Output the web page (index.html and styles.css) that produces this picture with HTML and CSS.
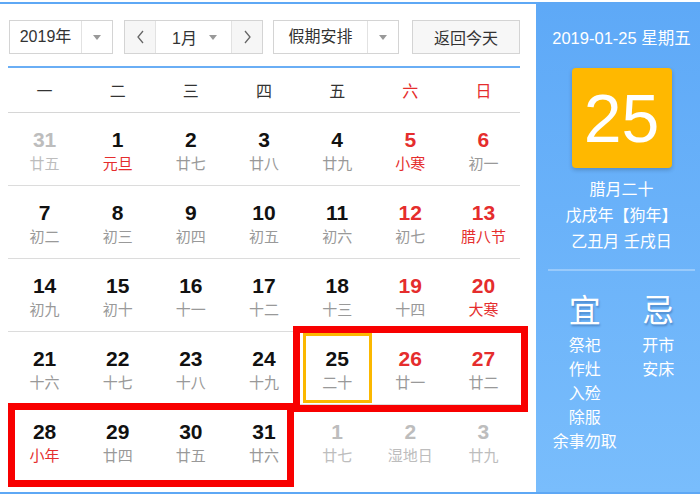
FILE: index.html
```html
<!DOCTYPE html>
<html lang="zh-CN">
<head>
<meta charset="utf-8">
<title>日历</title>
<link rel="stylesheet" href="styles.css">
</head>
<body>
<div class="cal">
  <div class="main">
    <div class="toolbar">
      <div class="sel sel-year">
        <span class="sel-text">2019年</span>
        <span class="sel-arrow"><i class="tri"></i></span>
      </div>
      <div class="month">
        <span class="mbtn"><svg width="9" height="14" viewBox="0 0 9 14"><path d="M7 1 L2 7 L7 13" fill="none" stroke="#666" stroke-width="1.3"/></svg></span>
        <span class="mmid"><span class="mtext">1月</span><i class="tri"></i></span>
        <span class="mbtn"><svg width="9" height="14" viewBox="0 0 9 14"><path d="M2 1 L7 7 L2 13" fill="none" stroke="#666" stroke-width="1.3"/></svg></span>
      </div>
      <div class="sel sel-holiday">
        <span class="sel-text">假期安排</span>
        <span class="sel-arrow"><i class="tri"></i></span>
      </div>
      <div class="today-btn">返回今天</div>
    </div>
    <div class="blue-line"></div>
    <div class="week">
      <span>一</span><span>二</span><span>三</span><span>四</span><span>五</span><span class="red">六</span><span class="red">日</span>
    </div>
    <div class="days">
      <div class="row">
        <div class="cell other"><b>31</b><em>廿五</em></div>
        <div class="cell"><b>1</b><em class="red">元旦</em></div>
        <div class="cell"><b>2</b><em>廿七</em></div>
        <div class="cell"><b>3</b><em>廿八</em></div>
        <div class="cell"><b>4</b><em>廿九</em></div>
        <div class="cell"><b class="red">5</b><em class="red">小寒</em></div>
        <div class="cell"><b class="red">6</b><em>初一</em></div>
      </div>
      <div class="row">
        <div class="cell"><b>7</b><em>初二</em></div>
        <div class="cell"><b>8</b><em>初三</em></div>
        <div class="cell"><b>9</b><em>初四</em></div>
        <div class="cell"><b>10</b><em>初五</em></div>
        <div class="cell"><b>11</b><em>初六</em></div>
        <div class="cell"><b class="red">12</b><em>初七</em></div>
        <div class="cell"><b class="red">13</b><em class="red">腊八节</em></div>
      </div>
      <div class="row">
        <div class="cell"><b>14</b><em>初九</em></div>
        <div class="cell"><b>15</b><em>初十</em></div>
        <div class="cell"><b>16</b><em>十一</em></div>
        <div class="cell"><b>17</b><em>十二</em></div>
        <div class="cell"><b>18</b><em>十三</em></div>
        <div class="cell"><b class="red">19</b><em>十四</em></div>
        <div class="cell"><b class="red">20</b><em class="red">大寒</em></div>
      </div>
      <div class="row">
        <div class="cell"><b>21</b><em>十六</em></div>
        <div class="cell"><b>22</b><em>十七</em></div>
        <div class="cell"><b>23</b><em>十八</em></div>
        <div class="cell"><b>24</b><em>十九</em></div>
        <div class="cell today"><b>25</b><em>二十</em></div>
        <div class="cell"><b class="red">26</b><em>廿一</em></div>
        <div class="cell"><b class="red">27</b><em>廿二</em></div>
      </div>
      <div class="row">
        <div class="cell"><b>28</b><em class="red">小年</em></div>
        <div class="cell"><b>29</b><em>廿四</em></div>
        <div class="cell"><b>30</b><em>廿五</em></div>
        <div class="cell"><b>31</b><em>廿六</em></div>
        <div class="cell other"><b>1</b><em>廿七</em></div>
        <div class="cell other"><b>2</b><em>湿地日</em></div>
        <div class="cell other"><b>3</b><em>廿九</em></div>
      </div>
    </div>
    <div class="mark mark-a"></div>
    <div class="mark mark-b"></div>
  </div>
  <div class="side">
    <div class="side-date">2019-01-25 星期五</div>
    <div class="big-day">25</div>
    <div class="lunar">腊月二十</div>
    <div class="lunar">戊戌年【狗年】</div>
    <div class="lunar">乙丑月 壬戌日</div>
    <div class="sep"></div>
    <div class="yiji">
      <div class="col">
        <div class="yj-title">宜</div>
        <div class="yj-item">祭祀</div>
        <div class="yj-item">作灶</div>
        <div class="yj-item">入殓</div>
        <div class="yj-item">除服</div>
        <div class="yj-item">余事勿取</div>
      </div>
      <div class="col">
        <div class="yj-title">忌</div>
        <div class="yj-item">开市</div>
        <div class="yj-item">安床</div>
      </div>
    </div>
  </div>
</div>
</body>
</html>
```

FILE: styles.css
```css
* { box-sizing: border-box; }
html, body { margin: 0; padding: 0; background: #fff; }
body {
  font-family: "Liberation Sans", "Noto Sans CJK SC", sans-serif;
  color: #333;
}
.cal {
  margin-top: 2px;
  width: 700px;
  height: 492px;
  border-top: 2px solid #5ea8f5;
  border-bottom: 2px solid #5ea8f5;
  display: flex;
}
.main {
  position: relative;
  width: 536px;
  padding: 0 16px 0 8px;
}
.toolbar {
  display: flex;
  margin-top: 16px;
  height: 34px;
  font-size: 16px;
}
.sel, .month, .today-btn {
  border: 1px solid #d4d4d4;
  height: 34px;
  display: flex;
  align-items: center;
  background: #fff;
}
.sel-year { width: 104px; margin-left: 1px; }
.sel-year .sel-text { width: 72px; }
.sel-holiday { width: 126px; margin-left: 10px; }
.sel-holiday .sel-text { width: 94px; }
.sel-text {
  text-align: center;
  height: 100%;
  line-height: 32px;
  border-right: 1px solid #e2e2e2;
  white-space: nowrap;
}
.sel-arrow {
  flex: 1;
  display: flex;
  justify-content: center;
  align-items: center;
}
.tri {
  display: block;
  width: 0;
  height: 0;
  border-left: 4px solid transparent;
  border-right: 4px solid transparent;
  border-top: 5px solid #999;
}
.month { width: 139px; margin-left: 11px; }
.mbtn {
  width: 30px;
  height: 100%;
  background: #f6f6f6;
  display: flex;
  align-items: center;
  justify-content: center;
}
.mmid {
  flex: 1;
  height: 100%;
  border-left: 1px solid #e2e2e2;
  border-right: 1px solid #e2e2e2;
  display: flex;
  align-items: center;
  padding: 0 14px 0 16px;
  justify-content: space-between;
}
.today-btn {
  width: 108px;
  margin-left: 13px;
  justify-content: center;
  background: #f7f7f7;
}
.blue-line {
  margin-top: 12px;
  height: 2px;
  background: #6aaef5;
}
.week {
  display: grid;
  grid-template-columns: repeat(7, 1fr);
  height: 45px;
  border-bottom: 1px solid #d6d6d6;
  font-size: 16px;
  font-family: "Noto Sans CJK SC", sans-serif;
  color: #333;
}
.week span { text-align: center; line-height: 44px; }
.red { color: #e52d2d !important; }
.row {
  display: grid;
  grid-template-columns: repeat(7, 1fr);
  height: 73px;
  border-bottom: 1px solid #dcdcdc;
}
.row:last-child { border-bottom: none; }
.cell {
  position: relative;
  text-align: center;
  padding-top: 14px;
}
.cell b {
  display: block;
  font-size: 21px;
  line-height: 25px;
  color: #111;
  font-weight: bold;
}
.cell em {
  display: block;
  font-style: normal;
  font-size: 15px;
  line-height: 22px;
  color: #999;
  font-family: "Noto Sans CJK SC", sans-serif;
}
.cell.other b, .cell.other em { color: #bdbdbd; }
.today::after {
  content: "";
  position: absolute;
  left: 2px;
  right: 2px;
  top: 1px;
  bottom: 1px;
  border: 3px solid #fbb800;
}
.mark {
  position: absolute;
  border: 7px solid #f80000;
}
.mark-a { left: 293px; top: 322px; width: 235px; height: 86px; }
.mark-b { left: 8px; top: 399px; width: 286px; height: 84px; }
.side {
  flex: 1;
  background: linear-gradient(#5ea9f7, #79bdfc);
  padding: 0 5px 0 12px;
  color: #fff;
  text-align: center;
  font-family: "Liberation Sans", "Noto Sans CJK SC", sans-serif;
}
.side-date {
  margin-top: 22px;
  font-size: 16.5px;
  line-height: 24px;
  white-space: nowrap;
}
.big-day {
  margin: 18px auto 0;
  width: 100px;
  height: 100px;
  background: #ffb800;
  border-radius: 4px;
  box-shadow: 0 2px 4px rgba(0, 0, 0, 0.2);
  font-size: 68px;
  line-height: 100px;
}
.lunar {
  font-size: 16px;
  line-height: 26px;
  white-space: nowrap;
}
.big-day + .lunar { margin-top: 9px; }
.sep {
  margin-top: 14px;
  height: 2px;
  background: rgba(255, 255, 255, 0.3);
}
.yiji { display: flex; margin-top: 17px; }
.col { flex: 1; }
.yj-title {
  font-size: 32px;
  line-height: 40px;
  font-family: "Noto Sans CJK SC", sans-serif;
  text-shadow: 1px 2px 2px rgba(0, 40, 100, 0.3);
  margin-bottom: 4px;
}
.yj-item {
  font-size: 16px;
  line-height: 24px;
  white-space: nowrap;
  font-family: "Noto Sans CJK SC", sans-serif;
}
```
